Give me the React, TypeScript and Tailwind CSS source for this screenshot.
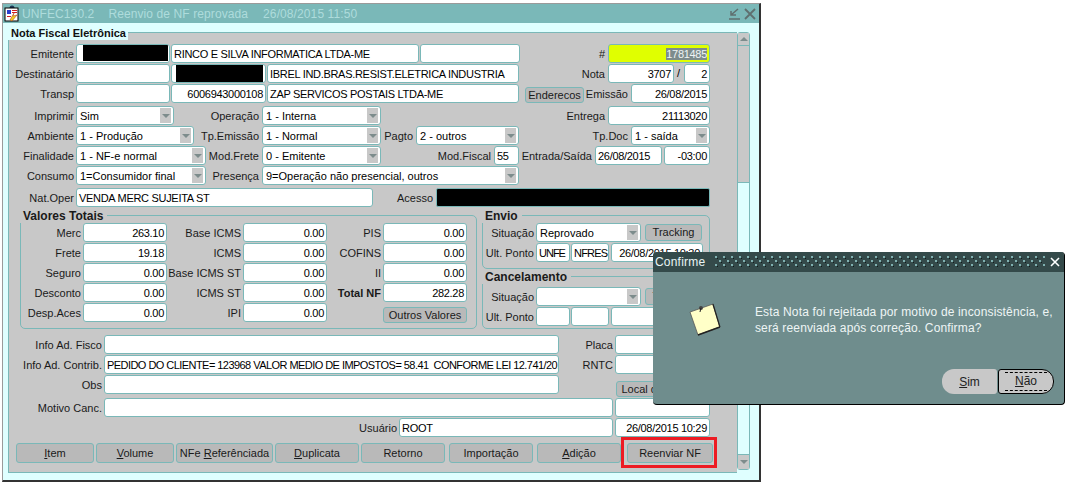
import type { ReactNode } from 'react';

const fieldBox = 'h-[19px] shrink-0 bg-white border border-[#7ab8b8] rounded-[3px] px-[2px] text-[11px] leading-[18px] tracking-[-0.3px] text-black whitespace-nowrap overflow-hidden';

function Label({ w, children, bold }: { w: number; children: ReactNode; bold?: boolean }) {
  return (
    <div style={{ width: w }} className={`shrink-0 pr-[2px] text-right text-[11px] leading-[20px] whitespace-nowrap text-[#1a1a1a] ${bold ? 'font-bold' : ''}`}>
      {children}
    </div>
  );
}

function Field({ w, children, right, ml }: { w: number; children?: ReactNode; right?: boolean; ml?: number }) {
  return (
    <div style={{ width: w, marginLeft: ml ?? 1 }} className={`${fieldBox} ${right ? 'text-right' : ''}`}>
      {children}
    </div>
  );
}

function Select({ w, children, ml }: { w: number; children?: ReactNode; ml?: number }) {
  return (
    <div style={{ width: w, marginLeft: ml ?? 1 }} className={`${fieldBox} relative pl-[3px] tracking-normal`}>
      <span className="leading-[19px]">{children}</span>
      <div className="absolute right-[2px] top-[1px] w-[11px] h-[15px] bg-[#c8c8c8] flex items-center justify-center">
        <div className="w-0 h-0 border-x-[4px] border-x-transparent border-t-[4px] border-t-[#7d8c8c]" />
      </div>
    </div>
  );
}

function Btn({ w, h = 20, children, ml, mt }: { w: number; h?: number; children: ReactNode; ml?: number; mt?: number }) {
  return (
    <div
      style={{ width: w, height: h, marginLeft: ml ?? 0, marginTop: mt ?? 0 }}
      className="shrink-0 bg-[#b9b9b9] border border-[#7ab8b8] rounded-[3px] text-center text-[11px] text-[#1a1a1a] whitespace-nowrap overflow-hidden flex items-center justify-center"
    >
      <span>{children}</span>
    </div>
  );
}

function Row({ children, h = 20 }: { children: ReactNode; h?: number }) {
  return (
    <div style={{ height: h }} className="flex items-start">
      {children}
    </div>
  );
}

function Group({ title, w, h, children }: { title: string; w: number; h: number; children: ReactNode }) {
  return (
    <div style={{ width: w, height: h }} className="relative border border-[#7ab8b8] rounded-[5px]">
      <div className="absolute -left-[1px] -top-[7px] h-[14px] bg-[#c8c8c8] pl-[3px] pr-[4px] text-[12px] leading-[14px] font-bold text-[#1a1a1a] whitespace-nowrap">{title}</div>
      {children}
    </div>
  );
}

function ValorRow({ a, av, b, bv, c, cv, bold }: { a: string; av: string; b: string; bv: string; c: string; cv: string; bold?: boolean }) {
  return (
    <Row>
      <Label w={62}>{a}</Label>
      <Field w={84} right ml={0}>{av}</Field>
      <Label w={76}>{b}</Label>
      <Field w={84} right ml={0}>{bv}</Field>
      <Label w={56} bold={bold}>{c}</Label>
      <Field w={84} right ml={0}>{cv}</Field>
    </Row>
  );
}

function NoteIcon() {
  return (
    <svg width="34" height="36" viewBox="0 0 34 36">
      <path d="M1 9 L24 1 L31 24 L9 32 Z" fill="#ffffc8" stroke="#555" strokeWidth="0.8" />
      <path d="M9 32 L31 24" stroke="#222" strokeWidth="1.6" />
      <path d="M24 1 L31 24" stroke="#222" strokeWidth="1.2" />
      <circle cx="12" cy="5" r="2" fill="#444" />
      <path d="M12 5 L11 9" stroke="#222" strokeWidth="1" />
    </svg>
  );
}

function Dialog() {
  return (
    <div className="absolute left-[653px] top-[252px] w-[412px] h-[153px] bg-[#6f8d8d] border-r border-b border-black rounded-[4px] overflow-hidden">
      <div className="h-[20px] bg-[#344a4a] flex items-center text-[#e8f4f4] text-[12px] tracking-[0.2px] pl-[2px]">
        <span className="w-[60px] shrink-0">Confirme</span>
        <svg width="330" height="12" className="shrink-0">
          <defs>
            <pattern id="dither" width="8" height="8" patternUnits="userSpaceOnUse">
              <rect x="0" y="0" width="2" height="2" fill="#7fb0b0" />
              <rect x="2" y="2" width="1" height="1" fill="#101c1c" />
              <rect x="4" y="4" width="2" height="2" fill="#7fb0b0" />
              <rect x="6" y="6" width="1" height="1" fill="#101c1c" />
            </pattern>
          </defs>
          <rect width="330" height="12" fill="url(#dither)" />
        </svg>
        <svg width="12" height="12" viewBox="0 0 12 12" className="ml-[4px]">
          <path d="M2 2 L10 10 M10 2 L2 10" stroke="#fff" strokeWidth="1.6" />
        </svg>
      </div>
      <div className="flex pl-[36px] pt-[31px]">
        <NoteIcon />
        <div className="ml-[32px] mt-[1px] text-[#eef5f5] text-[12px] leading-[16px] tracking-[0.15px] w-[310px]">
          Esta Nota foi rejeitada por motivo de inconsistência, e,<br />será reenviada após correção. Confirma?
        </div>
      </div>
      <div className="flex pl-[289px] mt-[30px]">
        <div className="w-[55px] h-[25px] bg-[#c8c8c8] rounded-l-[12px] rounded-r-[3px] text-[12px] flex items-center justify-center text-[#222]"><span><u>S</u>im</span></div>
        <div className="ml-[1px] w-[56px] h-[25px] bg-[#c8c8c8] border border-black rounded-r-[12px] rounded-l-[3px] text-[12px] flex items-center justify-center text-[#222]">
          <span className="w-[42px] h-[19px] border-y border-dashed border-black text-center leading-[17px]"><u>N</u>ão</span>
        </div>
      </div>
    </div>
  );
}

function Scrollbar() {
  return (
    <div className="w-[13px] flex flex-col h-[438px] border border-[#7ab8b8] rounded-[3px] bg-[#dfffff]">
      <div className="h-[13px] bg-[#c8c8c8] border-b border-[#7ab8b8] flex items-center justify-center">
        <div className="w-0 h-0 border-x-[4px] border-x-transparent border-b-[4px] border-b-[#7d8c8c]" />
      </div>
      <div className="h-[137px] bg-[#c8c8c8] border-b border-[#7ab8b8]" />
      <div className="flex-1" />
      <div className="h-[15px] bg-[#c8c8c8] border-t border-[#7ab8b8] flex items-center justify-center">
        <div className="w-0 h-0 border-x-[4px] border-x-transparent border-t-[4px] border-t-[#7d8c8c]" />
      </div>
    </div>
  );
}

export default function App() {
  return (
    <div className="relative w-[1069px] h-[496px] bg-white overflow-hidden font-['Liberation_Sans',Arial,sans-serif]">
      <div className="ml-[2px] mt-[3px] w-[759px] h-[479px] bg-[#dfffff] border-l border-t border-[#9a9a9a] border-r-2 border-b-2 border-r-[#333] border-b-[#333]">
        {/* title bar */}
        <div className="h-[19px] bg-[#7ab8b8] flex items-center text-[12px] text-[#aedcdc]">
          <svg width="16" height="17" viewBox="0 0 16 17" className="ml-[1px] shrink-0">
            <circle cx="8" cy="3" r="2.5" fill="#1c3a5a" />
            <rect x="1" y="3" width="13" height="13" fill="#fff" stroke="#000" />
            <rect x="3" y="5" width="4" height="4" fill="#2a3fd0" />
            <rect x="8" y="5" width="5" height="1" fill="#d02020" />
            <rect x="8" y="7" width="5" height="1" fill="#d02020" />
            <rect x="3" y="11" width="4" height="1" fill="#d02020" />
            <path d="M6 15 L10 8 L9 11 L13 10 L8 16 Z" fill="#f0d020" stroke="#b03010" strokeWidth="0.5" />
          </svg>
          <span className="ml-[2px] tracking-[0.1px]">UNFEC130.2</span>
          <span className="ml-[14px] tracking-[0.1px]">Reenvio de NF reprovada</span>
          <span className="ml-[15px] tracking-[0.1px]">26/08/2015 11:50</span>
          <div className="ml-auto mr-[3px] flex items-center gap-[3px]">
            <svg width="13" height="12" viewBox="0 0 13 12"><path d="M10 1 L3 7 M3 3 V7 H8 M1 11 H12" stroke="#5f6f6f" strokeWidth="1.5" fill="none" /></svg>
            <svg width="12" height="12" viewBox="0 0 12 12"><path d="M1 1 L11 11 M11 1 L1 11" stroke="#5f6f6f" strokeWidth="1.8" /></svg>
          </div>
        </div>
        <div className="flex pl-[5px] pt-[9px]">
          <div className="relative w-[729px] h-[441px] bg-[#c8c8c8] border-l border-t border-b border-[#7ab8b8]">
            <div className="absolute -left-[1px] -top-[6px] w-[120px] h-[13px] bg-[#dfffff] pl-[3px] text-[11px] leading-[13px] font-bold text-[#111] whitespace-nowrap">Nota Fiscal Eletrônica</div>
            <div className="pt-[11px]">
              <Row>
                <Label w={67}>Emitente</Label>
                <Field w={94} ml={0}><div className="ml-[4px] -mr-[1px] h-[16px] bg-black" /></Field>
                <Field w={248}>RINCO E SILVA INFORMATICA LTDA-ME</Field>
                <Field w={100} />
                <Label w={87}>#</Label>
                <div className={`${fieldBox} w-[102px] !bg-[#e0ff00] text-right ml-[1px]`}>
                  <span className="bg-[#7d8c8c] text-[#eef4f4]">1781485</span>
                </div>
              </Row>
              <Row>
                <Label w={67}>Destinatário</Label>
                <Field w={94} ml={0} />
                <Field w={95}><div className="ml-[2px] h-[17px] bg-black" /></Field>
                <Field w={252}>IBREL IND.BRAS.RESIST.ELETRICA INDUSTRIA</Field>
                <Label w={88}>Nota</Label>
                <Field w={66} right>3707</Field>
                <div className="w-[9px] shrink-0 text-center text-[11px] leading-[19px]">/</div>
                <Field w={26} right>2</Field>
              </Row>
              <Row h={22}>
                <Label w={67}>Transp</Label>
                <Field w={94} ml={0} />
                <Field w={95} right>6006943000108</Field>
                <Field w={252}>ZAP SERVICOS POSTAIS LTDA-ME</Field>
                <Btn w={59} h={16} ml={6} mt={3}>Enderecos</Btn>
                <Label w={46}>Emissão</Label>
                <Field w={79} right>26/08/2015</Field>
              </Row>
              <Row>
                <Label w={67}>Imprimir</Label>
                <Select w={98} ml={0}>Sim</Select>
                <Label w={87}>Operação</Label>
                <Select w={119}>1 - Interna</Select>
                <Label w={226}>Entrega</Label>
                <Field w={102} right>21113020</Field>
              </Row>
              <Row>
                <Label w={67}>Ambiente</Label>
                <Select w={118} ml={0}>1 - Produção</Select>
                <Label w={67}>Tp.Emissão</Label>
                <Select w={119}>1 - Normal</Select>
                <Label w={34}>Pagto</Label>
                <Select w={103}>2 - outros</Select>
                <Label w={111}>Tp.Doc</Label>
                <Select w={79}>1 - saída</Select>
              </Row>
              <Row>
                <Label w={67}>Finalidade</Label>
                <Select w={130} ml={0}>1 - NF-e normal</Select>
                <Label w={55}>Mod.Frete</Label>
                <Select w={119}>0 - Emitente</Select>
                <Label w={112}>Mod.Fiscal</Label>
                <Field w={25}>55</Field>
                <Label w={75}>Entrada/Saída</Label>
                <Field w={67}>26/08/2015</Field>
                <Field w={46} right ml={2}>-03:00</Field>
              </Row>
              <Row h={22}>
                <Label w={67}>Consumo</Label>
                <Select w={130} ml={0}>1=Consumidor final</Select>
                <Label w={55}>Presença</Label>
                <Select w={257}>9=Operação não presencial, outros</Select>
              </Row>
              <Row h={26}>
                <Label w={67}>Nat.Oper</Label>
                <Field w={297} ml={0}>VENDA MERC SUJEITA ST</Field>
                <Label w={62}>Acesso</Label>
                <div className="ml-[1px] h-[19px] w-[274px] bg-black border border-[#7ab8b8] rounded-[2px]" />
              </Row>
            </div>

            <div className="flex pl-[11px] pt-[1px]">
              <Group title="Valores Totais" w={457} h={114}>
                <div className="pt-[7px]">
                  <ValorRow a="Merc" av="263.10" b="Base ICMS" bv="0.00" c="PIS" cv="0.00" />
                  <ValorRow a="Frete" av="19.18" b="ICMS" bv="0.00" c="COFINS" cv="0.00" />
                  <ValorRow a="Seguro" av="0.00" b="Base ICMS ST" bv="0.00" c="II" cv="0.00" />
                  <ValorRow a="Desconto" av="0.00" b="ICMS ST" bv="0.00" c="Total NF" cv="282.28" bold />
                  <Row>
                    <Label w={62}>Desp.Aces</Label>
                    <Field w={84} right ml={0}>0.00</Field>
                    <Label w={76}>IPI</Label>
                    <Field w={84} right ml={0}>0.00</Field>
                    <Btn w={84} h={16} ml={56} mt={4}>Outros Valores</Btn>
                  </Row>
                </div>
              </Group>
              <div className="ml-[5px] flex flex-col">
                <Group title="Envio" w={228} h={54}>
                  <div className="pt-[7px]">
                    <Row>
                      <Label w={53}>Situação</Label>
                      <Select w={105} ml={0}>Reprovado</Select>
                      <Btn w={57} h={17} ml={4} mt={1}>Tracking</Btn>
                    </Row>
                    <Row>
                      <Label w={53}>Ult. Ponto</Label>
                      <Field w={34} ml={0}><span className="tracking-[-1px]">UNFE</span></Field>
                      <Field w={38}><span className="tracking-[-0.8px]">NFRES</span></Field>
                      <Field w={92} ml={2} right>26/08/2015 10:30</Field>
                    </Row>
                  </div>
                </Group>
                <div className="mt-[7px]">
                  <Group title="Cancelamento" w={228} h={53}>
                    <div className="pt-[10px]">
                      <Row>
                        <Label w={53}>Situação</Label>
                        <Select w={105} ml={0} />
                        <Btn w={57} h={17} ml={4} mt={1}>Tracking</Btn>
                      </Row>
                      <Row>
                        <Label w={53}>Ult. Ponto</Label>
                        <Field w={34} ml={0} />
                        <Field w={38} />
                        <Field w={92} ml={2} />
                      </Row>
                    </div>
                  </Group>
                </div>
              </div>
            </div>

            <div className="pt-[6px]">
              <Row>
                <Label w={95}>Info Ad. Fisco</Label>
                <Field w={455} ml={0} />
                <Label w={56}>Placa</Label>
                <Field w={95} ml={0} />
              </Row>
              <Row>
                <Label w={95}>Info Ad. Contrib.</Label>
                <Field w={455} ml={0}><span className="tracking-[-0.55px]">PEDIDO DO CLIENTE= 123968 VALOR MEDIO DE IMPOSTOS= 58.41&nbsp; CONFORME LEI 12.741/2012</span></Field>
                <Label w={56}>RNTC</Label>
                <Field w={95} ml={0} />
              </Row>
              <Row h={23}>
                <Label w={95}>Obs</Label>
                <Field w={455} ml={0} />
                <Btn w={94} h={16} ml={57} mt={6}>Local de Entrega</Btn>
              </Row>
              <Row>
                <Label w={95}>Motivo Canc.</Label>
                <Field w={509} ml={0} />
                <Field w={95} ml={2} />
              </Row>
              <Row>
                <Label w={390}>Usuário</Label>
                <Field w={214} ml={0}>ROOT</Field>
                <Field w={95} right ml={2}>26/08/2015 10:29</Field>
              </Row>
            </div>

            <div className="flex pl-[7px] pt-[5px] gap-[2px]">
              <Btn w={78}><u>I</u>tem</Btn>
              <Btn w={78}><u>V</u>olume</Btn>
              <Btn w={97}>NFe <u>R</u>eferênciada</Btn>
              <Btn w={84}><u>D</u>uplicata</Btn>
              <Btn w={84}>Retorno</Btn>
              <Btn w={84} ml={2}>Importação</Btn>
              <Btn w={84} ml={2}><u>A</u>dição</Btn>
              <Btn w={86} ml={4}>Reenviar NF</Btn>
            </div>
          </div>
          <Scrollbar />
        </div>
      </div>
      <div className="absolute left-[621px] top-[437px] w-[96px] h-[31px] border-[3px] border-[#ed1c24]" />
      <Dialog />
    </div>
  );
}
